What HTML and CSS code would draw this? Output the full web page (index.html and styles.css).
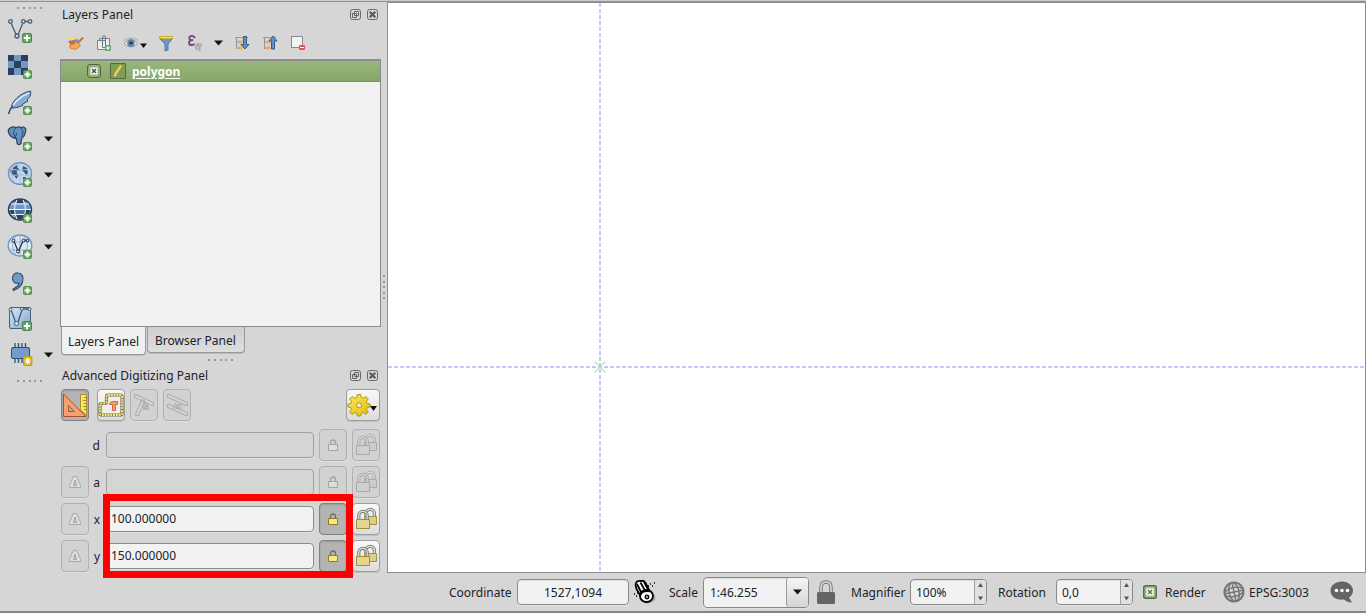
FILE: index.html
```html
<!DOCTYPE html>
<html lang="en">
<head>
<meta charset="utf-8">
<title>Advanced Digitizing</title>
<link rel="stylesheet" href="styles.css">
</head>
<body>
<svg class="defs" width="0" height="0">
  <defs>
    <linearGradient id="blue" x1="0" y1="0" x2="1" y2="1"><stop offset="0" stop-color="#dbe8f5"/><stop offset="1" stop-color="#7fa3cc"/></linearGradient>
    <linearGradient id="gold" x1="0" y1="0" x2="1" y2="1"><stop offset="0" stop-color="#fbe95c"/><stop offset="1" stop-color="#e2bd0a"/></linearGradient>
    <symbol id="plus" viewBox="0 0 10 10"><rect x=".5" y=".5" width="9" height="9" rx="1.5" fill="#69a562" stroke="#4f8a4b"/><path d="M5 1.8v6.4M1.8 5h6.4" stroke="#fff" stroke-width="2"/></symbol>
    <symbol id="lock" viewBox="0 0 10 12"><path d="M2.5 6V3.500a2.500 2.500 0 0 1 5 0V6" fill="none" stroke="#77715b" stroke-width="1.400"/><path d="M.5 5.500h9v6h-9z" fill="#fbe878" stroke="#8d7b32"/></symbol>
    <symbol id="lock-off" viewBox="0 0 10 12"><path d="M2.5 6V3.500a2.500 2.500 0 0 1 5 0V6" fill="none" stroke="#a4a4a4" stroke-width="1.400"/><path d="M.5 5.500h9v6h-9z" fill="#dedede" stroke="#a4a4a4"/></symbol>
    <symbol id="locks" viewBox="0 0 22 24"><path d="M11 10V6.500a4.200 4.200 0 0 1 8.400 0V10" fill="none" stroke="#83837c" stroke-width="3.200"/><path d="M11 10V6.500a4.200 4.200 0 0 1 8.400 0V10" fill="none" stroke="#dededa" stroke-width="1.300"/><path d="M9.500 9.500h12v8h-12z" fill="#dccf8a" stroke="#a39442"/><path d="M3.800 14V8.500a4.200 4.200 0 0 1 8.400 0V14" fill="none" stroke="#7b7b75" stroke-width="3.200"/><path d="M3.800 14V8.500a4.200 4.200 0 0 1 8.400 0V14" fill="none" stroke="#dededa" stroke-width="1.300"/><path d="M1.500 12.500h13v9h-13z" fill="#e2d691" stroke="#a08f3a"/></symbol>
    <symbol id="locks-off" viewBox="0 0 22 24"><path d="M11 10V6.500a4.200 4.200 0 0 1 8.400 0V10" fill="none" stroke="#b0b0b0" stroke-width="3.200"/><path d="M11 10V6.500a4.200 4.200 0 0 1 8.400 0V10" fill="none" stroke="#d8d8d8" stroke-width="1.300"/><path d="M9.500 9.500h12v8h-12z" fill="#cbcbcb" stroke="#aaa"/><path d="M3.800 14V8.500a4.200 4.200 0 0 1 8.400 0V14" fill="none" stroke="#a8a8a8" stroke-width="3.200"/><path d="M3.800 14V8.500a4.200 4.200 0 0 1 8.400 0V14" fill="none" stroke="#d8d8d8" stroke-width="1.300"/><path d="M1.500 12.500h13v9h-13z" fill="#d0d0d0" stroke="#a8a8a8"/></symbol>
    <symbol id="delta" viewBox="0 0 12 14"><path d="M4.300 1.500h3.400l2 4.500 1.800 4.500v2H.5v-2L2.300 6z" fill="#dedede" stroke="#a9a9a9"/><path d="M6 5 4.500 10.500h3z" fill="#d2d2d2" stroke="#a2a2a2"/></symbol>
    <symbol id="float" viewBox="0 0 11 11"><rect x=".5" y=".5" width="10" height="10" rx="2" fill="none" stroke="#696969"/><path d="M4.500 2.500h4v4h-4zM2.500 4.500h4v4h-4z" fill="none" stroke="#666"/></symbol>
    <symbol id="close" viewBox="0 0 11 11"><rect x=".5" y=".5" width="10" height="10" rx="2" fill="none" stroke="#696969"/><path d="m2.700 2.700 5.600 5.600M8.300 2.700 2.700 8.300" stroke="#5c5c5c" stroke-width="2.200"/></symbol>
    <symbol id="drop" viewBox="0 0 9 6"><path d="M0 .5h9L4.5 5.500z" fill="#151515"/></symbol>
  </defs>
</svg>

<div class="window">
  <nav class="toolbar">
    <div class="dots"><i></i><i></i><i></i><i></i><i></i></div>
    <div class="tool"><svg width="26" height="26"><g fill="none" stroke="#44607e" stroke-width="1.300"><path d="m4.300 6.500 4.800 11.300M11 18l4.500-11.300M18 4.500h3"/><circle cx="3.500" cy="4.500" r="1.800"/><circle cx="10" cy="19" r="2"/><circle cx="16.300" cy="4.500" r="1.800"/><circle cx="23" cy="4.500" r="1.800"/></g><use href="#plus" x="15" y="16" width="10" height="10"/></svg></div>
    <div class="tool"><svg width="26" height="26"><path fill="#6f98c8" d="M1 2h20v20H1z"/><path fill="#293f5c" d="M1 2h6v6H1zM14 2h7v6h-7zM7 8h7v7H7zM1 15h6v7H1zM14 15h7v7h-7z"/><use href="#plus" x="16" y="17" width="9" height="9"/></svg></div>
    <div class="tool"><svg width="26" height="26"><path d="M4 19C5 12 13 4 23.500 2c1 4-1 7-3.500 9l1 1-6 3.500 1 .5c-4 2.500-8 3-12 3z" fill="#86abd6" stroke="#324e73"/><path d="M1.500 25C5 15 12 8 22 4" fill="none" stroke="#d8e7f5" stroke-width="1.500"/><path d="M1.500 25Q3 20 6 16.500" fill="none" stroke="#314b6b" stroke-width="1.500"/><use href="#plus" x="16" y="17" width="9" height="9"/></svg></div>
    <div class="tool"><svg width="26" height="26"><path d="M2 4c2-2 5-2.500 7-1.500 2-.8 4-.8 5.500 0 3-1 5 1 4 4-.5 3-2 6-4 7l-.5 5c-2 2-4 1-4-1l-.5-4-3-.5C3 12 0 6 2 4z" fill="#6791c1" stroke="#294765" stroke-width="1.300"/><path d="M8.500 3C6 6 6 10 9 13M14 3c3 3 2 7 0 9M9.500 8c0 3-1 4-2.500 3.500" fill="none" stroke="#294765"/><use href="#plus" x="16" y="17" width="9" height="9"/></svg><svg class="drop" width="9" height="6"><use href="#drop"/></svg></div>
    <div class="tool"><svg width="26" height="26"><ellipse cx="13" cy="12.500" rx="11.500" ry="10.800" fill="#c5d9ed" stroke="#6d92bd" stroke-width="1.400"/><path d="m3.500 9 3-3 4-2v3l2 1-3 3 2 3-2 4-3-4-3-2zM16 5l4 2 1 5-2 2-2-3-2-1zM16 16l3 0-1 3-2-1z" fill="#3b5878"/><path d="M3 8q10 3 20 0M2 15q11-3 22 0M13 2v21M7 4q-5 9 0 17M19 4q5 9 0 17" fill="none" stroke="#a3c0df"/><use href="#plus" x="16" y="17" width="9" height="9"/></svg><svg class="drop" width="9" height="6"><use href="#drop"/></svg></div>
    <div class="tool"><svg width="26" height="26"><ellipse cx="13" cy="12.500" rx="11.500" ry="10.500" fill="#6f9aca" stroke="#263e5a" stroke-width="1.400"/><path d="M8 3h10l-1 3H9zM3 12.500h20l-1 5H4zM8 18h9v4H9z" fill="#28415f"/><path d="M8.500 13h9v4h-9z" fill="#4b719c"/><path d="M2 12.500h22M4 7h18M4 17.500h18M10 3q-5 9 0 19M16 3q5 9 0 19" fill="none" stroke="#f1f5f8" stroke-width="1.100"/><use href="#plus" x="16" y="17" width="9" height="9"/></svg></div>
    <div class="tool"><svg width="26" height="26"><ellipse cx="13" cy="12.500" rx="11.800" ry="10.500" fill="#dfe6ee" stroke="#6b94c5" stroke-width="1.300"/><path d="M2 9h22M3 17h20M13 2v21M9 3q-7 10 0 19M17 3q7 10 0 19" fill="none" stroke="#8eb0d7"/><path d="m7 8 4 10M12 17l4-9M17 7.500h5" stroke="#25384f" stroke-width="1.300"/><g fill="#eee" stroke="#182839"><circle cx="6.500" cy="7.500" r="1.400"/><circle cx="11" cy="18.500" r="1.500"/><circle cx="16.500" cy="7.500" r="1.400"/><circle cx="20.500" cy="7.500" r="1.200"/></g><use href="#plus" x="16" y="17" width="9" height="9"/></svg><svg class="drop" width="9" height="6"><use href="#drop"/></svg></div>
    <div class="tool"><svg width="26" height="26"><path d="M6 20c4-2 6-4 6-6-4 1-6-1-6.500-4C5 6 8 3.500 11 4c4 0 6 4 4.500 9-1 4-5 7-9 8.500z" fill="#6f9bcb" stroke="#344f71" stroke-width="1.200"/><use href="#plus" x="16" y="17" width="9" height="9"/></svg></div>
    <div class="tool"><svg width="26" height="26"><rect x="2.500" y="2.500" width="21" height="21" rx="1.500" fill="url(#blue)" stroke="#47617d"/><path d="m4.500 6 4 11M11 17 15 5M17 4h5" fill="none" stroke="#425c7a" stroke-width="1.300"/><g fill="#eef4fa" stroke="#405974"><circle cx="3.500" cy="4.500" r="1.500"/><circle cx="9.500" cy="18.500" r="2"/><circle cx="15" cy="4" r="1.500"/><circle cx="22.500" cy="4" r="1.500"/></g><use href="#plus" x="15" y="16" width="10" height="10"/></svg></div>
    <div class="tool"><svg width="26" height="26"><path d="M8 7V2M11.500 7V2M15 7V2M18.500 7V2M8 22v-5M11.500 22v-5M15 22v-5" stroke="#2f4e72" stroke-width="1.300"/><rect x="4.500" y="6.500" width="18" height="11" rx="1.500" fill="#729ccd" stroke="#2b4d76"/><rect x="16.500" y="15.500" width="8.500" height="9" rx="1" fill="#dcae19" stroke="#c99b13"/><path d="M20.700 16.500v7M17.500 20h6.500M18.500 17.500l4.500 5M23 17.500l-4.500 5" stroke="#fff" stroke-width="1.100"/></svg><svg class="drop" width="9" height="6"><use href="#drop"/></svg></div>
    <div class="dots"><i></i><i></i><i></i><i></i><i></i></div>
  </nav>

  <aside class="panels">
    <header class="title"><span class="t-layers">Layers Panel</span><svg width="11" height="11"><use href="#float"/></svg><svg width="11" height="11"><use href="#close"/></svg></header>
    <div class="actions">
      <svg class="brush" width="22" height="18"><path d="M4 4h7l-2 5H5z" fill="#f3df62"/><path d="m2 7 6-1 2 6-4 1z" fill="#e55b48"/><path d="m7 6 5-1 1 4-4 1z" fill="#6c91dc"/><path d="M4 11q4-.5 6.500-3l4 3.500Q11 15 9 15.500L4 14z" fill="#f2ad5c" stroke="#d58131"/><path d="m12 9 5-5.500" stroke="#bb7935" stroke-width="2"/></svg>
      <svg class="duplicate" width="22" height="18"><path d="M9.500 4.500h7v9h-7zM6.500 6V4.500H9M4.500 6.500h8v9h-8z" fill="#ececec" stroke="#818181"/><path d="M9.500 11V4q0-2.500 1.500-2.500T12.500 4v6" fill="none" stroke="#547b93"/><rect x="12" y="11" width="6" height="6" rx="1" fill="#62a875"/><path d="M15 12v4M13 14h4" stroke="#fff"/></svg>
      <svg class="eye" width="28" height="18"><path d="M2 9.500q7-8 14 0-7 7-14 0z" fill="#eee" stroke="#969696"/><circle cx="9" cy="9" r="3.800" fill="#5f83ae"/><circle cx="9" cy="9" r="1.600" fill="#20364f"/><path d="M2 6.500q7-5 14 0" fill="none" stroke="#aaa"/><path d="M18 9.500h7l-3.500 4.500z" fill="#111"/></svg>
      <svg class="filter" width="22" height="18"><path d="M4.500 4.500h13L13 10v6l-3 1v-7z" fill="#6899cf" stroke="#4b79ab"/><path d="M4.500 2.500h13v2h-13z" fill="#f2e25a" stroke="#c9ae2b"/></svg>
      <svg class="expression" width="22" height="18"><path d="M11 4C9 .5 4 2 5.500 5q1 1.500 3.500 1-4.500.5-4 3c.5 3 5 2.500 6 .5" fill="none" stroke="#72407e" stroke-width="1.800"/><path d="M10 9h8v3l-1.500 1v4h-2v-5h-1v4h-2v-4L10 11z" fill="#aaa"/><path d="M12 9.500v1.500M16 9.500v1.500" stroke="#e9e9e9"/></svg>
      <svg class="small-drop" width="9" height="6"><use href="#drop"/></svg>
      <svg class="expand" width="22" height="18"><path d="M4 3.500h13M5.500 4v11M5.500 8H8M5.500 14H8" fill="none" stroke="#969696"/><path d="M8 7h3v2H8zM8 13h3v2H8z" fill="#fbd589" stroke="#f79e24"/><path d="M12.500 2.500h3v8h2.500l-4 4.500-4-4.500h2.500z" fill="#6091c5" stroke="#325d8d"/></svg>
      <svg class="collapse" width="22" height="18"><path d="M4 3.500h13M5.500 4v11M5.500 8H8M5.500 14H8" fill="none" stroke="#969696"/><path d="M8 7h3v2H8zM8 13h3v2H8z" fill="#fbd589" stroke="#f79e24"/><path d="M12.500 15h3V7h2.500l-4-5-4 5h2.500z" fill="#6091c5" stroke="#325d8d"/></svg>
      <svg class="remove" width="22" height="18"><path d="M4.500 2.500h11v11h-11z" fill="#f2f2f2" stroke="#868686"/><rect x="12" y="11" width="6" height="5" rx="1" fill="#ea5050"/><path d="M13 13.500h4" stroke="#fff"/></svg>
    </div>
    <div class="tree"><div class="layer"><svg width="14" height="14"><rect x=".5" y=".5" width="13" height="13" rx="2.500" fill="#93b372" stroke="#56634a"/><rect x="3.500" y="3.500" width="7" height="7" fill="#fff"/><path d="m5 5 4 4M9 5 5 9" stroke="#4c5744" stroke-width="1.700"/></svg><svg class="pencil" width="16" height="16"><path d="M.5.500h15v15H.500z" fill="#7d9f54" stroke="#526c3b"/><path d="m4 13.500.5-3.500L10 1.500l2.500 1.500L7 11.500z" fill="#e8d765" stroke="#a48b36" stroke-width=".7"/><path d="m4 14 .5-3 2 1z" fill="#f5e8cb"/></svg><b class="t-polygon">polygon</b></div></div>
    <div class="tabs"><div class="tab current"><span class="t-layers">Layers Panel</span></div><div class="tab"><span class="t-browser">Browser Panel</span></div></div>
    <div class="dots splitter"><i></i><i></i><i></i><i></i><i></i></div>
    <header class="title adv"><span class="t-adv">Advanced Digitizing Panel</span><svg width="11" height="11"><use href="#float"/></svg><svg width="11" height="11"><use href="#close"/></svg></header>
    <div class="cad">
      <div class="button down"><svg width="26" height="30"><path d="M1.500 4v22.500H24z" fill="#f8a06b" stroke="#a74e2d"/><path d="M6.500 15.500v6h6z" fill="#aeaaa7" stroke="#a3583b"/><path d="M18.500 4.500h6v21l-6-6z" fill="#f8e467" stroke="#ad9330"/><path d="M22 7.500h2M21 10.500h3M22 13.500h2M21 16.500h3M22 19.500h2" stroke="#a48b30"/></svg></div>
      <div class="button first"><svg width="26" height="30"><path d="M10 5h12.500q1.500 0 1.500 1.500v17q0 1.500-1.500 1.500h-19Q2 25 2 23.500V15q0-1.500 1.500-1.500H7q1.500 0 1.500-1.500V6.500Q8.500 5 10 5z" fill="#eee" stroke="#77704a" stroke-width="3.200"/><path d="M10 5h12.500q1.500 0 1.500 1.500v17q0 1.500-1.500 1.500h-19Q2 25 2 23.500V15q0-1.500 1.500-1.500H7q1.500 0 1.500-1.500V6.500Q8.500 5 10 5z" fill="none" stroke="#f6e879" stroke-width="1.800" stroke-dasharray="2 .8"/><path d="M11.500 13.500q1-2 3-2h5v3h-2v6h-3v-6h-3z" fill="#f99a66" stroke="#c77044"/></svg></div>
      <div class="button off"><svg width="26" height="30"><g fill="#d4d4d4" stroke="#aaa"><path d="m4 4 19 9-1 3L3 7zM11 9.500l3 1.500L7 26l-3-1z"/></g><path d="m11 16 2 2 4-3M12 14q5 0 5 5h-5" fill="none" stroke="#aaa" stroke-width="1.300"/></svg></div>
      <div class="button off"><svg width="26" height="30"><g fill="#d4d4d4" stroke="#a8a8a8"><path d="m4 4 20 9-1 3L3 7zM4 14l20 9-1 3L3 17z"/></g><path d="M9 15h9m-9 3h9M11 13l4 6m-3 0 4-5" stroke="#aaa"/></svg></div>
      <div class="button gear"><svg width="32" height="28"><path d="M10.300 3.500h3.400l.5 3 2.100.9 2.500-1.900 2.500 2.500-1.900 2.500.8 2 3 .6v2.800l-3 .6-.8 2 1.900 2.500-2.500 2.500-2.500-1.900-2.100.9-.5 2.500h-3.400l-.5-2.500-2.100-.9-2.500 1.900L2.700 21l1.900-2.500-.8-2-3-.6v-2.800l3-.6.8-2L2.700 8l2.500-2.500 2.500 1.900 2.100-.9z" fill="url(#gold)" stroke="#ad9414"/><circle cx="12" cy="14.300" r="2.500" fill="#eee" stroke="#ad9414"/><path d="M23 15h7l-3.500 5z" fill="#111"/></svg></div>
    </div>
    <div class="coords">
      <span></span><label>d</label><div class="field off"></div><div class="button off"><svg width="10" height="12"><use href="#lock-off"/></svg></div><div class="button off"><svg width="22" height="24"><use href="#locks-off"/></svg></div>
      <div class="button off"><svg width="12" height="14"><use href="#delta"/></svg></div><label>a</label><div class="field off"></div><div class="button off"><svg width="10" height="12"><use href="#lock-off"/></svg></div><div class="button off"><svg width="22" height="24"><use href="#locks-off"/></svg></div>
      <div class="button off"><svg width="12" height="14"><use href="#delta"/></svg></div><label>x</label><div class="field">100.000000</div><div class="button down"><svg width="10" height="12"><use href="#lock"/></svg></div><div class="button"><svg width="22" height="24"><use href="#locks"/></svg></div>
      <div class="button off"><svg width="12" height="14"><use href="#delta"/></svg></div><label>y</label><div class="field">150.000000</div><div class="button down"><svg width="10" height="12"><use href="#lock"/></svg></div><div class="button"><svg width="22" height="24"><use href="#locks"/></svg></div>
      <div class="highlight"></div>
    </div>
    <div class="side-grip"></div>
  </aside>

  <main class="map">
    <svg width="977" height="569"><g stroke="#c5c5ff" stroke-width="2" stroke-dasharray="4 2"><path d="M0 364h977M212 0v569"/></g><path d="m206.500 358.500 11 11m0-11-11 11" stroke="#9beba9" stroke-width="1.500" stroke-opacity=".75"/></svg>
  </main>

  <footer class="status">
    <span class="s-coord">Coordinate</span><div class="input coord">1527,1094</div>
    <svg class="mouse" width="26" height="26"><path d="m19 13 3 3q2 6-5 8l-5 1z" fill="#baa9a9"/><path d="M2.500 6Q3 1 8 2q3-1 4.500 2l4 8-9 5-4-7z" fill="#fff" stroke="#000" stroke-width="1.800"/><path d="m4 5 5 10M7.500 3.500l5 9M11 3l5 9" stroke="#000" stroke-width="1.800"/><ellipse cx="13.500" cy="17" rx="6.500" ry="6" fill="#fff" stroke="#000" stroke-width="1.800"/><path d="M7 16q2-5 9-4" fill="none" stroke="#000" stroke-width="2.500"/><circle cx="14" cy="18" r="1.800" fill="#aaa" stroke="#000" stroke-width="1.300"/><path d="M14 7h2M17 5h1M19 7h1M21 4h1M1 15h1M3 17h1M4 14h1" stroke="#000" stroke-width="1.400"/></svg>
    <span class="s-scale">Scale</span><div class="input combo"><span>1:46.255</span><div class="combo-arrow"><svg width="9" height="6"><use href="#drop"/></svg></div></div>
    <svg class="padlock" width="18" height="24"><path d="M4 13V7.500Q4 2 9 2t5 5.500V13" fill="none" stroke="#777" stroke-width="3.500"/><path d="M4 13V7.500Q4 2 9 2t5 5.500V13" fill="none" stroke="#ddd" stroke-width="1.500"/><rect y="12" width="18" height="12" rx="1.500" fill="#656565"/></svg>
    <span class="s-mag">Magnifier</span><div class="input spin"><span>100%</span><div class="steps"><svg width="11" height="23"><path d="m3 7 2.500-4L8 7zM3 16.500h5l-2.500 4z" fill="#555"/></svg></div></div>
    <span class="s-rot">Rotation</span><div class="input spin"><span>0,0</span><div class="steps"><svg width="11" height="23"><path d="m3 7 2.500-4L8 7zM3 16.500h5l-2.500 4z" fill="#555"/></svg></div></div>
    <svg class="check" width="14" height="14"><rect x=".75" y=".75" width="12.500" height="12.500" rx="2" fill="#a3c17f" stroke="#5c694e" stroke-width="1.500"/><rect x="3.500" y="3.500" width="7" height="7" fill="#fff"/><path d="m5 5 4 4M9 5 5 9" stroke="#667752" stroke-width="1.700"/></svg>
    <span class="s-render">Render</span>
    <svg class="globe" width="22" height="22"><g fill="none" stroke="#777" stroke-width="1.500"><circle cx="11" cy="11" r="9.500" stroke-width="2.200"/><g transform="rotate(-12 11 11)"><ellipse cx="11" cy="11" rx="5" ry="9.500"/><ellipse cx="11" cy="11" rx="9.500" ry="4.500"/><path d="M11 1v20M1 11h20"/></g></g></svg>
    <span class="s-epsg">EPSG:3003</span>
    <svg class="bubble" width="24" height="23"><path d="M12 .5c6 0 11 4 11 9 0 3-2 6-4 7l3 5c-3 0-6-1-8-3-8 1-13.500-3-13.500-9C.5 4 6 .5 12 .5z" fill="#646464"/><g fill="#fff"><circle cx="6.500" cy="9.500" r="1.800"/><circle cx="12" cy="9.500" r="1.800"/><circle cx="17.500" cy="9.500" r="1.800"/></g></svg>
  </footer>
</div>
</body>
</html>
```
FILE: styles.css
```css
* { box-sizing: border-box; }
body { margin: 0; background: #d6d6d6; color: #202327; font: 12px/17px "Noto Sans", sans-serif; overflow: hidden; }
svg { display: block; flex: none; }
.defs { position: absolute; }
span, b, label { white-space: nowrap; }

.window { display: grid; grid-template: 572px 38px / 56px 331px 979px; width: 1366px; height: 613px; padding-top: 1px; border-bottom: 2px solid #858585; background: #d6d6d6; box-shadow: inset 0 1px #cdcdcd, inset 0 2px #929292; }

.toolbar { padding-top: 6px; }
.dots { display: flex; gap: 3.800px; padding-left: 17px; height: 5px; }
.dots i { width: 2px; height: 2px; background: #969696; }
.tool { display: flex; align-items: center; height: 36px; padding-left: 7px; }
.drop { margin: 1px 0 0 11px; }
.toolbar .dots:last-child { margin-top: 8px; }

.panels { position: relative; padding: 4px 6px 0 4px; }
.title { display: flex; align-items: center; height: 19px; padding: 0 3px 0 2px; }
.title span { margin-right: auto; }
.title svg + svg { margin-left: 6px; }
.actions { display: flex; align-items: center; height: 35px; padding: 3px 0 0 6px; gap: 6px; }
.duplicate { margin-left: -1px; }
.eye { margin-left: 1px; }
.filter { margin-left: -1px; }
.expression { margin-left: 1px; }
.small-drop { margin: 0 2px 0 2px; }
.tree { height: 268px; border: 1px solid #8c8c8c; border-top-width: 2px; background: #f2f2f2; }
.layer { display: flex; align-items: center; height: 21px; padding-left: 26px; background: linear-gradient(#99b77c, #88a668); border-bottom: 1px solid #789459; color: #fff; }
.pencil { margin: 0 6px 0 9px; }
.layer b { text-decoration: underline; text-underline-offset: 2px; }
.tabs { display: flex; align-items: flex-start; gap: 1px; height: 30px; padding-left: 1px; }
.tab { width: 98px; height: 26px; padding: 5px 0 0 7px; border: 1px solid #999; border-top: 0; border-radius: 0 0 4px 4px; background: linear-gradient(#cecece, #dedede); box-shadow: 0 1px #bbb; }
.tab.current { width: 85px; height: 28px; padding: 6px 0 0 6px; background: #f0f0f0; }
.splitter { padding-left: 148px; height: 8px; margin-top: 2px; }
.adv { height: 17px; }

.button { display: flex; align-items: center; justify-content: center; width: 28px; height: 32px; border: 1px solid #9d9d9d; border-radius: 4px; background: linear-gradient(#f8f8f8, #dcdcdc); box-shadow: 0 1px #c2c2c2; }
.button.down { background: #b4b4b4; border-color: #818181; box-shadow: inset 0 1px 2px #999; }
.button.off { background: #d2d2d2; border-color: #b1b1b1; box-shadow: 0 1px #dedede; }
.cad { display: flex; gap: 5px; height: 45px; padding: 5px 1px 0; }
.cad .first { margin-left: 3px; }
.cad .gear { width: 34px; margin-left: auto; }
.coords { position: relative; display: grid; grid-template-columns: 28px 7px 208px 28px 28px; grid-template-rows: repeat(4, 32px); gap: 5px; padding-left: 1px; align-items: center; }
.coords label { justify-self: end; margin-right: 1px; }
.field { height: 26px; margin-top: -1px; padding: 3px 4px; border: 1px solid #8b8b8b; border-radius: 4px; background: #f2f2f2; box-shadow: 0 1px #e1e1e1; }
.field.off { background: #d5d5d5; border-color: #a1a1a1; }
.highlight { position: absolute; left: 43px; top: 65px; width: 250px; height: 84px; border: 7px solid #f00; }
.side-grip { position: absolute; left: 327px; top: 274px; width: 2px; height: 25px; background: repeating-linear-gradient(#969696 0 2px, transparent 2px 5.600px); }

.map { margin-top: 1px; height: 571px; border: 1px solid #8e8e8e; background: #fff; }

.status { grid-column: 1 / -1; display: flex; align-items: center; padding-left: 449px; }
.status > span { flex: none; }
.input { flex: none; height: 26px; padding: 4px 6px; border: 1px solid #898989; border-radius: 4px; background: #f2f2f2; box-shadow: 0 1px #e4e4e4, inset 0 1px #ddd; }
.s-coord { width: 68px; }
.coord { width: 112px; text-align: center; }
.mouse { margin: 0 10px 0 4px; }
.s-scale { width: 34px; }
.combo { display: flex; justify-content: space-between; width: 106px; height: 31px; padding: 0 0 0 6px; line-height: 29px; }
.combo-arrow { display: flex; align-items: center; justify-content: center; width: 22px; border-left: 1px solid #999; border-radius: 3px; background: linear-gradient(#f5f5f5, #d5d5d5); }
.padlock { margin: 0 16px 0 8px; }
.s-mag { width: 59px; }
.spin { display: flex; justify-content: space-between; width: 77px; padding: 0 0 0 5px; line-height: 25px; }
.steps { width: 12px; border-left: 1px solid #a1a1a1; background: #e1e1e1; border-radius: 0 3px 3px 0; }
.s-rot { width: 48px; margin: 0 10px 0 11px; }
.check { margin: 0 8px 0 10px; }
.s-render { width: 41px; }
.globe { margin: 0 4px 0 17px; }
.s-epsg { width: 61px; }
.bubble { margin-left: 20px; }
```
